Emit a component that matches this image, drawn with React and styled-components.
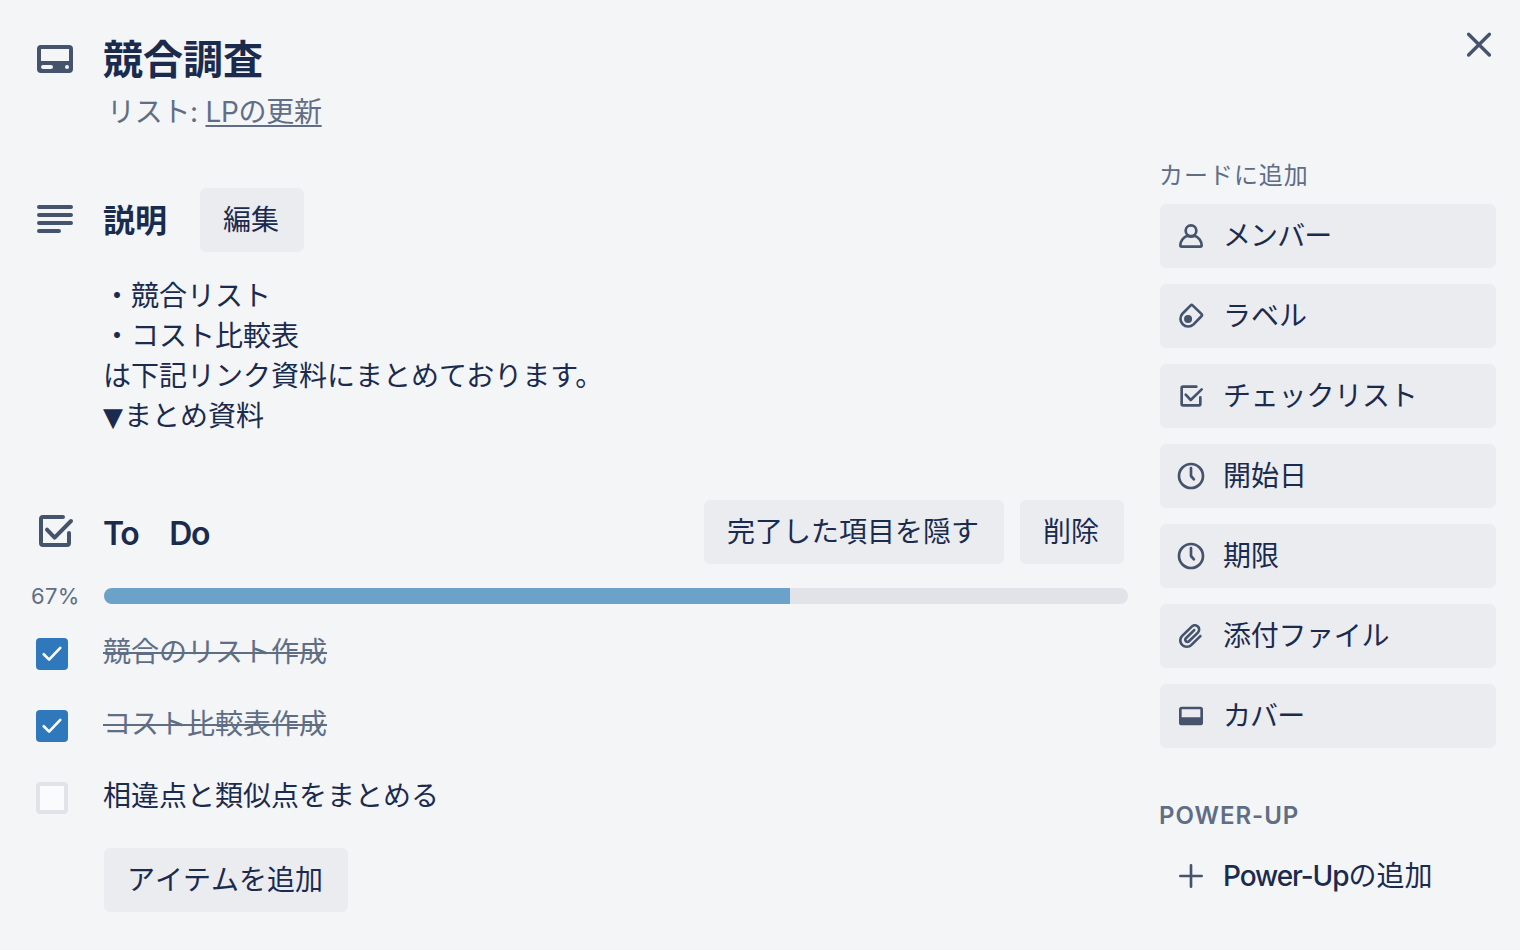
import React from 'react';
import styled, { createGlobalStyle, css } from 'styled-components';

const colors = {
  page: '#f4f5f7',
  text: '#1b2b4d',
  muted: '#606e85',
  icon: '#45536d',
  button: '#ebecf0',
  track: '#e1e3e9',
  progress: '#6ba2c9',
  blue: '#2f78bb',
};

const GlobalStyle = createGlobalStyle`
  * {
    box-sizing: border-box;
  }

  body {
    margin: 0;
    background: ${colors.page};
    color: ${colors.text};
    font-family: Inter, 'Noto Sans CJK JP', sans-serif;
    font-size: 28px;
    line-height: 40px;
  }
`;

const StyledWrapper = styled.div`
  width: 1520px;
  height: 950px;
  overflow: hidden;
`;

const StyledHeader = styled.header`
  display: grid;
  grid-template-columns: 103px 1fr 64px;
  height: 156px;
  padding-top: 35px;
`;

const StyledIconCell = styled.div`
  display: flex;
  padding-left: 31px;
`;

const StyledTitle = styled.h1`
  margin: 0;
  padding-top: 1px;
  font-size: 40px;
  line-height: 48px;
  font-weight: 700;
`;

const StyledSubtitle = styled.p`
  margin: 8px 0 0;
  padding-left: 4px;
  color: ${colors.muted};
  letter-spacing: -0.3px;
`;

const StyledListLink = styled.a`
  color: inherit;
  text-decoration: underline;
  text-decoration-thickness: 2px;
  text-underline-offset: 3px;
  text-decoration-skip-ink: none;
`;

const StyledClose = styled.button`
  width: 48px;
  height: 48px;
  margin: -14px 0 0 -1px;
  padding: 0;
  border: none;
  background: none;
`;

const StyledBody = styled.div`
  display: flex;
  gap: 32px;
`;

const StyledMain = styled.main`
  width: 1128px;
  padding-top: 32px;
`;

const StyledSection = styled.section`
  margin-bottom: 64px;
`;

const StyledSectionHeader = styled.div`
  display: grid;
  grid-template-columns: 103px 1fr;
  align-items: center;
  height: 64px;
`;

const StyledHeadingRow = styled.div`
  display: flex;
  align-items: center;
  gap: ${({ $gap }) => $gap}px;
  padding-right: 4px;
`;

const StyledHeading = styled.h2`
  margin: 0;
  padding-top: 1px;
  font-size: 32px;
  font-weight: 700;
  white-space: pre;
  ${({ $latin }) =>
    $latin &&
    css`
      margin-right: auto;
      padding-top: 4px;
      font-weight: 600;
      letter-spacing: -1.3px;
    `}
`;

const StyledButton = styled.button`
  height: 64px;
  padding: 0 25px 0 23px;
  border: none;
  border-radius: 6px;
  background: ${colors.button};
  color: inherit;
  font: inherit;
  white-space: nowrap;
`;

const StyledDescription = styled.div`
  margin: 24px 0 0 103px;
`;

const StyledLine = styled.div`
  height: 40px;
`;

const StyledMarker = styled.span`
  font-family: 'DejaVu Sans', sans-serif;
  font-size: 26px;
  margin-right: 1px;
`;

const StyledProgressRow = styled.div`
  display: flex;
  align-items: center;
  height: 24px;
  margin: 20px 0 24px;
`;

const StyledPercent = styled.span`
  width: 104px;
  padding-left: 31px;
  color: ${colors.muted};
  font-size: 22px;
  line-height: 24px;
  letter-spacing: 0.3px;
`;

const StyledTrack = styled.div`
  flex: 1;
  height: 16px;
  border-radius: 8px;
  background: ${colors.track};
  overflow: hidden;
`;

const StyledBar = styled.div`
  height: 100%;
  background: ${colors.progress};
`;

const StyledItem = styled.div`
  display: grid;
  grid-template-columns: 67px 1fr;
  padding-left: 36px;
  height: 72px;
`;

const StyledCheckbox = styled.span`
  display: flex;
  width: 32px;
  height: 32px;
  margin-top: 6px;
  border-radius: 4px;
  ${({ $checked }) =>
    $checked
      ? css`
          background: ${colors.blue};
        `
      : css`
          border: 4px solid ${colors.track};
          background: #fafbfc;
        `}
`;

const StyledItemText = styled.span`
  justify-self: start;
  ${({ $checked }) =>
    $checked &&
    css`
      color: ${colors.muted};
      text-decoration: line-through;
      text-decoration-thickness: 2px;
    `}
`;

const StyledAddItem = styled(StyledButton)`
  margin-left: 104px;
  font-kerning: none;
`;

const StyledSidebar = styled.aside`
  width: 336px;
`;

const StyledSidebarTitle = styled.h3`
  margin: 0 0 8px -1px;
  color: ${colors.muted};
  font-size: 24px;
  font-weight: ${({ $strong }) => ($strong ? 600 : 400)};
  letter-spacing: 0.04em;
`;

const StyledSidebarList = styled.div`
  display: flex;
  flex-direction: column;
  gap: 16px;
  margin-bottom: 48px;
`;

const StyledSidebarButton = styled(StyledButton)`
  display: flex;
  align-items: center;
  gap: 16px;
  width: 100%;
  padding: 0 15px;
  letter-spacing: ${({ $tracking }) => $tracking || 0}px;
  ${({ $plain }) =>
    $plain &&
    css`
      background: none;
    `}
`;

const StyledLatin = styled.span`
  font-weight: 500;
  letter-spacing: -1.1px;
`;

const StyledIcon = styled.svg`
  display: block;
  flex: none;
  width: ${({ $size }) => $size}px;
  height: ${({ $size }) => $size}px;
  fill: none;
  stroke: ${({ $color }) => $color || colors.icon};
  stroke-width: ${({ $stroke }) => $stroke || 2};
  stroke-linecap: round;
  stroke-linejoin: round;

  .solid {
    fill: ${colors.icon};
    stroke: none;
  }
`;

const icons = {
  card: (
    <path
      className="solid"
      fillRule="evenodd"
      d="M5 5a2 2 0 0 0-2 2v10a2 2 0 0 0 2 2h14a2 2 0 0 0 2-2V7a2 2 0 0 0-2-2H5zm0 2h14v6H5V7zm1 8h4a1 1 0 0 1 0 2H6a1 1 0 0 1 0-2zm12 0a1 1 0 0 1 0 2 1 1 0 0 1 0-2z"
    />
  ),
  text: <path d="M4 5.5h16M4 9.5h16M4 13.5h16M4 17.5h10" />,
  checklist: (
    <path d="M16 4.5H6a1 1 0 0 0-1 1v12a1 1 0 0 0 1 1h12a1 1 0 0 0 1-1v-5M8 10.8l3.8 4L20 6.5" />
  ),
  checklistSmall: (
    <path d="M16 5H6a1 1 0 0 0-1 1v12a1 1 0 0 0 1 1h12a1 1 0 0 0 1-1v-5M8 11l3.8 4L20 7" />
  ),
  member: (
    <>
      <circle cx="12" cy="8" r="4" />
      <path d="M9.2 11.8C6.3 12.9 4 15.9 4 19a1 1 0 0 0 1 1h14a1 1 0 0 0 1-1c0-3.1-2.3-6.1-5.2-7.2" />
      <path d="M9.2 11.8q2.8 1.4 5.6 0" />
    </>
  ),
  label: (
    <>
      <path d="M5.7 10.1L11.8 4a1 1 0 0 1 1.4 0L20 10.6a1 1 0 0 1 0 1.4l-6.1 6.3a5.8 5.8 0 0 1-8.2-8.2z" />
      <circle className="solid" cx="9.8" cy="14.2" r="3" />
    </>
  ),
  clock: (
    <>
      <circle cx="12" cy="12" r="9" />
      <path d="M12 6v6l2.2 2.5" />
    </>
  ),
  attachment: (
    <path
      className="solid"
      d="M11.6426 17.9647C10.1123 19.46 7.62736 19.4606 6.10092 17.9691C4.57505 16.478 4.57769 14.0467 6.10253 12.5566L13.2505 5.57184C14.1476 4.6952 15.5861 4.69251 16.4832 5.56921C17.3763 6.44184 17.3778 7.85135 16.4869 8.72199L9.78361 15.2722C9.53288 15.5172 9.12807 15.5163 8.86954 15.2636C8.61073 15.0107 8.60963 14.6158 8.86954 14.3618L15.0989 8.27463C15.4812 7.90109 15.4812 7.29546 15.0989 6.92192C14.7167 6.54838 14.0969 6.54838 13.7146 6.92192L7.48523 13.0091C6.45911 14.0118 6.46356 15.618 7.48523 16.6163C8.50674 17.6145 10.1511 17.6186 11.1679 16.6249L17.8712 10.0747C19.5274 8.45632 19.5244 5.83555 17.8676 4.2165C16.2047 2.59156 13.5266 2.59657 11.8662 4.21913L4.71822 11.2039C2.42951 13.4404 2.42555 17.083 4.71661 19.3218C7.00774 21.5606 10.7323 21.5597 13.0269 19.3174L19.7133 12.7837C20.0956 12.4101 20.0956 11.8045 19.7133 11.431C19.331 11.0574 18.7113 11.0574 18.329 11.431L11.6426 17.9647Z"
    />
  ),
  cover: (
    <path
      className="solid"
      fillRule="evenodd"
      d="M5 5a2 2 0 0 0-2 2v10a2 2 0 0 0 2 2h14a2 2 0 0 0 2-2V7a2 2 0 0 0-2-2H5zm0 2h14v6H5V7z"
    />
  ),
  plus: <path d="M12 4v16M4 12h16" />,
  close: <path d="M6.8 6.6l10.4 10.4M17.2 6.6L6.8 17" />,
  tick: <path d="M5.8 12.2l4 4 8.4-8.8" />,
};

const Icon = ({ name, size, color, stroke }) => (
  <StyledIcon viewBox="0 0 24 24" $size={size} $color={color} $stroke={stroke}>
    {icons[name]}
  </StyledIcon>
);

const todoItems = [
  { text: '競合のリスト作成', checked: true },
  { text: 'コスト比較表作成', checked: true },
  { text: '相違点と類似点をまとめる', checked: false },
];

const cardActions = [
  { icon: 'member', label: 'メンバー', tracking: -0.9 },
  { icon: 'label', label: 'ラベル' },
  { icon: 'checklistSmall', label: 'チェックリスト', tracking: -0.2 },
  { icon: 'clock', label: '開始日' },
  { icon: 'clock', label: '期限' },
  { icon: 'attachment', label: '添付ファイル', tracking: -0.3 },
  { icon: 'cover', label: 'カバー', tracking: -0.9 },
];

const Checklist = ({ title, items }) => {
  const done = items.filter(({ checked }) => checked).length;
  const percent = Math.round((done / items.length) * 100);

  return (
    <section>
      <StyledSectionHeader>
        <StyledIconCell>
          <Icon name="checklist" size={48} />
        </StyledIconCell>
        <StyledHeadingRow $gap={16}>
          <StyledHeading $latin>{title}</StyledHeading>
          <StyledButton>完了した項目を隠す</StyledButton>
          <StyledButton>削除</StyledButton>
        </StyledHeadingRow>
      </StyledSectionHeader>
      <StyledProgressRow>
        <StyledPercent>{percent}%</StyledPercent>
        <StyledTrack>
          <StyledBar style={{ width: `${percent}%` }} />
        </StyledTrack>
      </StyledProgressRow>
      {items.map(({ text, checked }) => (
        <StyledItem key={text}>
          <StyledCheckbox $checked={checked}>
            {checked && <Icon name="tick" size={32} color="#ffffff" />}
          </StyledCheckbox>
          <StyledItemText $checked={checked}>{text}</StyledItemText>
        </StyledItem>
      ))}
      <StyledAddItem>アイテムを追加</StyledAddItem>
    </section>
  );
};

const Sidebar = () => (
  <StyledSidebar>
    <StyledSidebarTitle>カードに追加</StyledSidebarTitle>
    <StyledSidebarList>
      {cardActions.map(({ icon, label, tracking }) => (
        <StyledSidebarButton key={label} $tracking={tracking}>
          <Icon name={icon} size={32} />
          {label}
        </StyledSidebarButton>
      ))}
    </StyledSidebarList>
    <StyledSidebarTitle $strong>POWER-UP</StyledSidebarTitle>
    <StyledSidebarButton $plain>
      <Icon name="plus" size={32} />
      <span>
        <StyledLatin>Power-Up</StyledLatin>の追加
      </span>
    </StyledSidebarButton>
  </StyledSidebar>
);

const App = () => (
  <StyledWrapper lang="ja">
    <GlobalStyle />
    <StyledHeader>
      <StyledIconCell>
        <Icon name="card" size={48} />
      </StyledIconCell>
      <div>
        <StyledTitle>競合調査</StyledTitle>
        <StyledSubtitle>
          リスト: <StyledListLink>LPの更新</StyledListLink>
        </StyledSubtitle>
      </div>
      <StyledClose aria-label="閉じる">
        <Icon name="close" size={48} stroke={1.7} />
      </StyledClose>
    </StyledHeader>
    <StyledBody>
      <StyledMain>
        <StyledSection>
          <StyledSectionHeader>
            <StyledIconCell>
              <Icon name="text" size={48} />
            </StyledIconCell>
            <StyledHeadingRow $gap={33}>
              <StyledHeading>説明</StyledHeading>
              <StyledButton>編集</StyledButton>
            </StyledHeadingRow>
          </StyledSectionHeader>
          <StyledDescription>
            <StyledLine>・競合リスト</StyledLine>
            <StyledLine>・コスト比較表</StyledLine>
            <StyledLine>は下記リンク資料にまとめております。</StyledLine>
            <StyledLine>
              <StyledMarker>▼</StyledMarker>まとめ資料
            </StyledLine>
          </StyledDescription>
        </StyledSection>
        <Checklist title="To　Do" items={todoItems} />
      </StyledMain>
      <Sidebar />
    </StyledBody>
  </StyledWrapper>
);

export default App;
